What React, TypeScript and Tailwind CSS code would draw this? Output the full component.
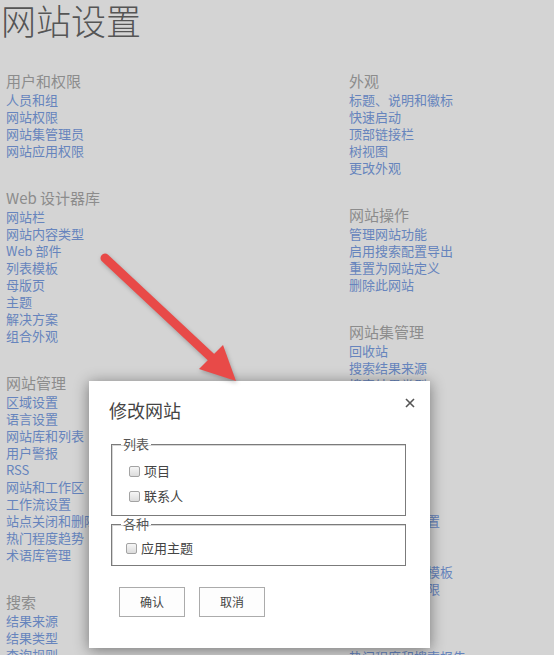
import React from 'react';

const leftGroups = [
    { title: '用户和权限', links: ['人员和组', '网站权限', '网站集管理员', '网站应用权限'] },
    {
        title: 'Web 设计器库',
        links: ['网站栏', '网站内容类型', 'Web 部件', '列表模板', '母版页', '主题', '解决方案', '组合外观'],
    },
    {
        title: '网站管理',
        links: ['区域设置', '语言设置', '网站库和列表', '用户警报', 'RSS', '网站和工作区', '工作流设置', '站点关闭和删除', '热门程度趋势', '术语库管理'],
    },
    { title: '搜索', links: ['结果来源', '结果类型', '查询规则', '架构'] },
];

const rightGroups = [
    { title: '外观', links: ['标题、说明和徽标', '快速启动', '顶部链接栏', '树视图', '更改外观'] },
    { title: '网站操作', links: ['管理网站功能', '启用搜索配置导出', '重置为网站定义', '删除此网站'] },
    {
        title: '网站集管理',
        links: [
            '回收站', '搜索结果来源', '搜索结果类型', '搜索查询规则', '搜索架构', '搜索设置', '搜索配置导入',
            '搜索配置导出', '网站集功能', '网站层次结构', '网站集审核设置', '审核日志报告', '门户网站连接',
            '内容类型策略模板', '网站集应用权限', '存储指标', '网站集上载', '网站策略', '热门程度和搜索报告',
        ],
    },
];

function Group({ title, links }: { title: string; links: string[] }) {
    return (
        <div className="mb-[29px]">
            <h3 className="text-[15px] leading-[20px] text-[#8c8c8c] whitespace-nowrap">{title}</h3>
            {links.map((l) => (
                <div key={l} className="text-[13px] leading-[17px] text-[#6684bd] whitespace-nowrap">
                    {l}
                </div>
            ))}
        </div>
    );
}

function Check({ label, className }: { label: string; className?: string }) {
    return (
        <div className={`flex items-center h-[20px] ${className ?? ''}`}>
            <span className="w-[11px] h-[11px] rounded-[2px] border border-[#a3a3a3] bg-gradient-to-b from-[#f6f6f6] to-[#dcdcdc]" />
            <span className="ml-[4px] text-[13px] leading-[20px] text-[#444]">{label}</span>
        </div>
    );
}

export default function App() {
    return (
        <div
            className="relative w-[554px] h-[655px] overflow-hidden bg-[#d4d4d4]"
            style={{ fontFamily: '"Noto Sans CJK SC", "Noto Sans", sans-serif' }}
        >
            {/* dimmed settings page */}
            <div className="pl-[1px]">
                <h1 className="text-[35px] leading-[40px] font-light text-[#555]">网站设置</h1>
                <div className="flex pl-[5px] pt-[31px]">
                    <div className="w-[343px] shrink-0">
                        {leftGroups.map((g) => (
                            <Group key={g.title} {...g} />
                        ))}
                    </div>
                    <div>
                        {rightGroups.map((g) => (
                            <Group key={g.title} {...g} />
                        ))}
                    </div>
                </div>
            </div>

            {/* dialog */}
            <div className="absolute left-[89px] top-[381px] w-[341px] h-[267px] bg-white shadow-[0_2px_14px_rgba(0,0,0,0.45)] pl-[22px] pt-[17px]">
                <div className="text-[18px] leading-[24px] text-[#444] -ml-[2px]">修改网站</div>
                <svg className="absolute left-[316px] top-[17px]" width="10" height="10" viewBox="0 0 10 10">
                    <path d="M1 1L9 9M9 1L1 9" stroke="#555" strokeWidth="1.6" />
                </svg>

                <fieldset className="mt-[14px] w-[295px] border border-[#7b7b7b] shadow-[inset_1px_1px_0_#d6d6d6] pl-[9px] pb-[9px]">
                    <legend className="px-[2px] text-[13px] leading-[16px] text-[#555]">列表</legend>
                    <Check label="项目" className="ml-[8px] mt-[9px]" />
                    <Check label="联系人" className="ml-[8px] mt-[5px]" />
                </fieldset>

                <fieldset className="w-[295px] border border-[#7b7b7b] shadow-[inset_1px_1px_0_#d6d6d6] pl-[9px] pb-[7px]">
                    <legend className="px-[2px] text-[13px] leading-[16px] text-[#555]">各种</legend>
                    <Check label="应用主题" className="ml-[5px] mt-[6px]" />
                </fieldset>

                <div className="flex gap-[14px] ml-[8px] mt-[21px]">
                    <button className="w-[66px] h-[30px] border border-[#ababab] bg-[#fdfdfd] text-[12px] text-[#444]">确认</button>
                    <button className="w-[66px] h-[30px] border border-[#ababab] bg-[#fdfdfd] text-[12px] text-[#444]">取消</button>
                </div>
            </div>

            {/* annotation arrow */}
            <svg className="absolute left-0 top-0 pointer-events-none" width="554" height="655">
                <g style={{ filter: 'drop-shadow(1px 2px 2px rgba(0,0,0,0.25))' }}>
                    <line x1="105" y1="258" x2="213" y2="359" stroke="#e84a48" strokeWidth="9" strokeLinecap="round" />
                    <polygon points="199,369 223,345 236,381" fill="#e84a48" />
                </g>
            </svg>
        </div>
    );
}
